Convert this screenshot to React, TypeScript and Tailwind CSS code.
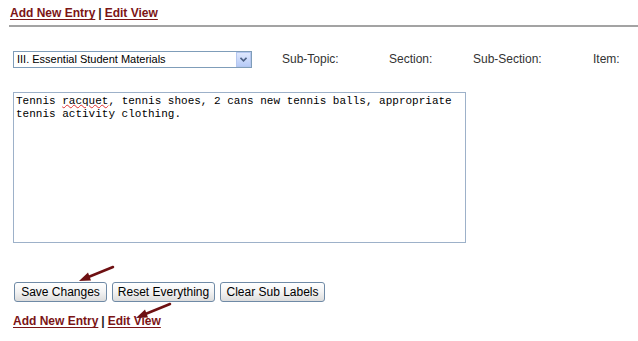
import React from 'react';

// Link pair used above and below the editor
function NavLinks() {
  return (
    <div className="text-[12px] leading-[14px] font-bold text-[#222]">
      <a href="#" className="text-[#7b1416] underline decoration-1 underline-offset-2">Add New Entry</a>
      <span className="mx-[3px]">|</span>
      <a href="#" className="text-[#7b1416] underline decoration-1 underline-offset-2">Edit View</a>
    </div>
  );
}

function Arrow({ className }: { className: string }) {
  return (
    <svg className={className} width="40" height="18" viewBox="0 0 40 18">
      <line x1="35" y1="2" x2="8" y2="13" stroke="#6e1012" strokeWidth="2.5" strokeLinecap="round" />
      <polygon points="1,16 10,7.5 13,15.5" fill="#6e1012" />
    </svg>
  );
}

function WinButton({ label, width }: { label: string; width: string }) {
  return (
    <button
      type="button"
      className={`${width} h-[20px] rounded-[3px] border border-[#6f8aa6] bg-gradient-to-b from-white via-[#f3f3f3] to-[#dcdcdc] text-[12px] leading-[18px] text-black`}
    >
      {label}
    </button>
  );
}

export default function App() {
  return (
    <div className="relative w-[638px] h-[341px] bg-white overflow-hidden font-['Liberation_Sans',Arial,sans-serif]">
      {/* Topo */}
      <div className="pt-[6px] pl-[10px]">
        <NavLinks />
      </div>
      <div className="ml-[9px] mt-[5px] border-t-2 border-[#a3a3a3]" />

      {/* Linha de seleção */}
      <div className="flex items-center mt-[23px] pl-[13px] text-[12px] text-[#333]">
        <div className="w-[239px] h-[17px] border border-[#7f9db9] flex items-center bg-white">
          <span className="flex-1 pl-[3px] text-[11px] text-black leading-[15px]">III. Essential Student Materials</span>
          <span className="w-[15px] h-[15px] bg-gradient-to-b from-[#dfe8fd] to-[#b7cbf7] border border-[#b5c7ef] flex items-center justify-center">
            <svg width="7" height="5" viewBox="0 0 7 5">
              <polyline points="0.5,0.8 3.5,3.8 6.5,0.8" fill="none" stroke="#4d6185" strokeWidth="1.6" />
            </svg>
          </span>
        </div>
        <span className="ml-[30px] w-[107px]">Sub-Topic:</span>
        <span className="w-[84px]">Section:</span>
        <span className="w-[120px]">Sub-Section:</span>
        <span>Item:</span>
      </div>

      {/* Área de texto */}
      <div className="mt-[24px] ml-[13px] w-[453px] h-[151px] border border-[#9db1c9] px-[2px] pt-[2px] font-['Liberation_Mono','Courier_New',monospace] text-[11px] leading-[13px] text-black">
        Tennis <span className="underline decoration-wavy decoration-[#e03030] decoration-1 underline-offset-[0px]">racquet</span>, tennis shoes, 2 cans new tennis balls, appropriate
        <br />
        tennis activity clothing.
      </div>

      {/* Botões */}
      <div className="flex gap-[5px] mt-[39px] ml-[14px]">
        <WinButton label="Save Changes" width="w-[93px]" />
        <WinButton label="Reset Everything" width="w-[103px]" />
        <WinButton label="Clear Sub Labels" width="w-[105px]" />
      </div>

      <div className="pl-[13px] mt-[12px]">
        <NavLinks />
      </div>

      <Arrow className="absolute left-[78px] top-[265px]" />
      <Arrow className="absolute left-[135px] top-[302px]" />
    </div>
  );
}
